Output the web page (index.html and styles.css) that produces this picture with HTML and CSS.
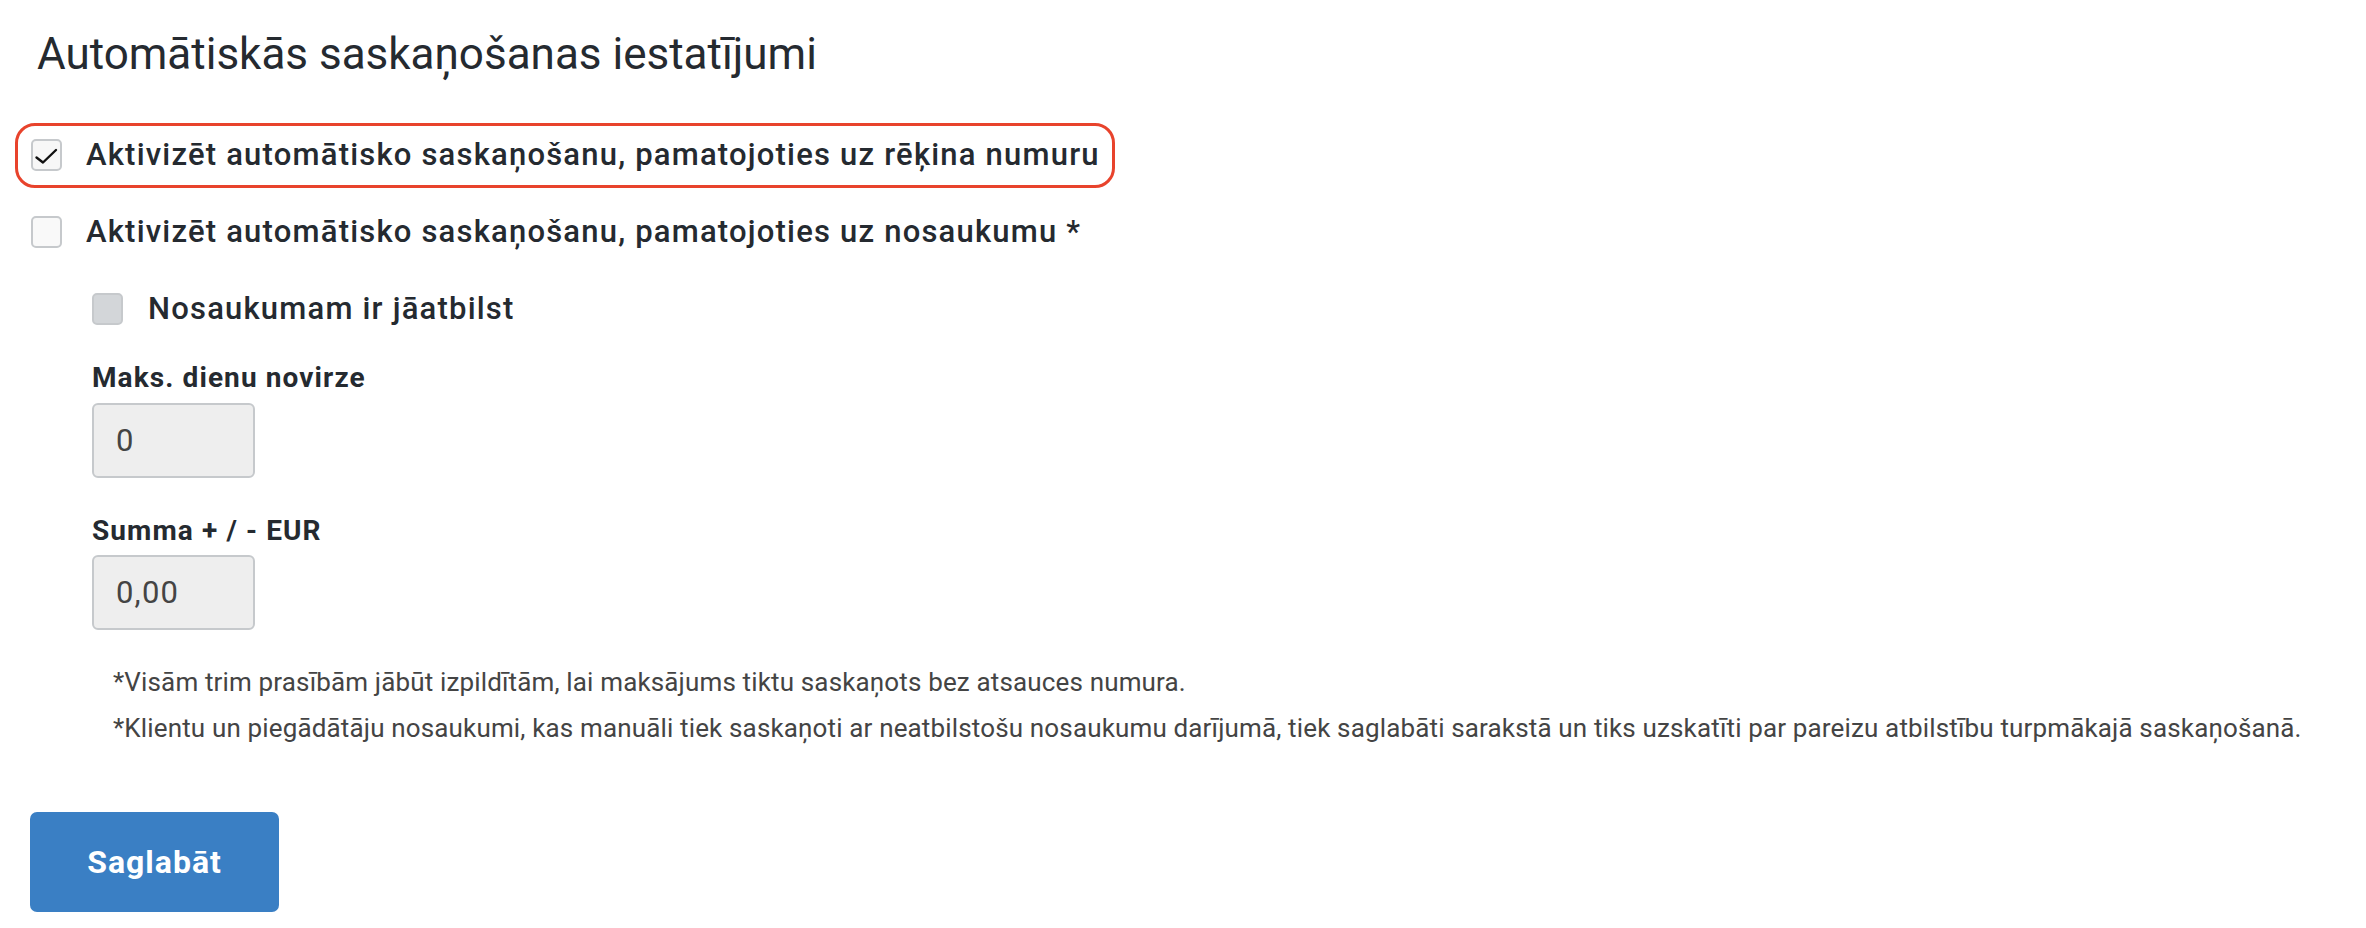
FILE: index.html
```html
<!DOCTYPE html>
<html lang="lv">
<head>
<meta charset="utf-8">
<title>Automātiskās saskaņošanas iestatījumi</title>
<link rel="stylesheet" href="styles.css">
</head>
<body>
<main class="page">
  <h1 class="title">Automātiskās saskaņošanas iestatījumi</h1>

  <div class="opt opt-highlight">
    <span class="box box-checked">
      <svg class="check" viewBox="0 0 27 28" width="27" height="28" aria-hidden="true"><path d="M3.5 16.5 L10 21.5 L23 9" fill="none" stroke="#111" stroke-width="2.4" stroke-linecap="round" stroke-linejoin="round"/></svg>
    </span>
    <span class="opt-label">Aktivizēt automātisko saskaņošanu, pamatojoties uz rēķina numuru</span>
  </div>

  <div class="opt">
    <span class="box"></span>
    <span class="opt-label">Aktivizēt automātisko saskaņošanu, pamatojoties uz nosaukumu *</span>
  </div>

  <div class="opt opt-indent">
    <span class="box box-disabled"></span>
    <span class="opt-label">Nosaukumam ir jāatbilst</span>
  </div>

  <div class="fields">
    <label class="field-label">Maks. dienu novirze</label>
    <div class="input">0</div>
    <label class="field-label field-label-2">Summa + / - EUR</label>
    <div class="input">0,00</div>
  </div>

  <div class="notes">
    <p class="note">*Visām trim prasībām jābūt izpildītām, lai maksājums tiktu saskaņots bez atsauces numura.</p>
    <p class="note">*Klientu un piegādātāju nosaukumi, kas manuāli tiek saskaņoti ar neatbilstošu nosaukumu darījumā, tiek saglabāti sarakstā un tiks uzskatīti par pareizu atbilstību turpmākajā saskaņošanā.</p>
  </div>

  <button class="btn">Saglabāt</button>
</main>
</body>
</html>
```
FILE: styles.css
```css
html, body {
  margin: 0;
  padding: 0;
  background: #ffffff;
}

body {
  font-family: Roboto, "Liberation Sans", Arial, sans-serif;
  color: #252a30;
}

.page {
  padding: 29px 0 0 30px;
  display: flex;
  flex-direction: column;
  align-items: flex-start;
}

.title {
  margin: 0 0 44px 7px;
  font-size: 44px;
  line-height: 50px;
  font-weight: 400;
  color: #252a30;
}

.opt {
  display: flex;
  align-items: center;
  gap: 24px;
  margin-left: -15px;
  margin-bottom: 12px;
  padding: 13px 12px 14px 13px;
  border: 3px solid transparent;
  border-radius: 20px;
}

.opt-highlight {
  border-color: #e8432c;
}

.opt-indent {
  margin-left: 46px;
  gap: 25px;
}

.box {
  width: 31px;
  height: 32px;
  box-sizing: border-box;
  border: 2px solid #c6c9cc;
  border-radius: 5px;
  background: #f9f9f9;
  display: flex;
  align-items: center;
  justify-content: center;
  flex: none;
}

.check {
  display: block;
}

.box-checked {
  background: #f7f7f7;
}

.box-disabled {
  background: #d3d6d9;
  border-color: #c6c9cc;
}

.opt-label {
  font-size: 31px;
  line-height: 32px;
  font-weight: 500;
  letter-spacing: 1.2px;
  color: #252a30;
  white-space: nowrap;
}

.fields {
  margin: 8px 0 0 62px;
  display: flex;
  flex-direction: column;
  align-items: flex-start;
}

.field-label {
  font-size: 28px;
  line-height: 32px;
  font-weight: 700;
  letter-spacing: 1.1px;
  color: #252a30;
  margin-bottom: 9px;
}

.field-label-2 {
  margin-top: 37px;
  margin-bottom: 8px;
}

.input {
  width: 163px;
  height: 75px;
  box-sizing: border-box;
  border: 2px solid #c6c9cc;
  border-radius: 6px;
  background: #eeeeee;
  padding: 0 0 0 22px;
  font-size: 31px;
  line-height: 71px;
  letter-spacing: 1.2px;
  color: #444444;
}

.notes {
  margin: 34px 0 0 83px;
}

.note {
  margin: 0 0 10px 0;
  font-size: 26px;
  line-height: 36px;
  letter-spacing: 0.15px;
  color: #444444;
  white-space: nowrap;
}

.btn {
  margin-top: 56px;
  width: 249px;
  height: 100px;
  border: none;
  border-radius: 7px;
  background: #3a7fc4;
  color: #ffffff;
  font-family: Roboto, "Liberation Sans", Arial, sans-serif;
  font-size: 32px;
  font-weight: 700;
  letter-spacing: 1px;
  padding: 0;
  cursor: pointer;
}
```
